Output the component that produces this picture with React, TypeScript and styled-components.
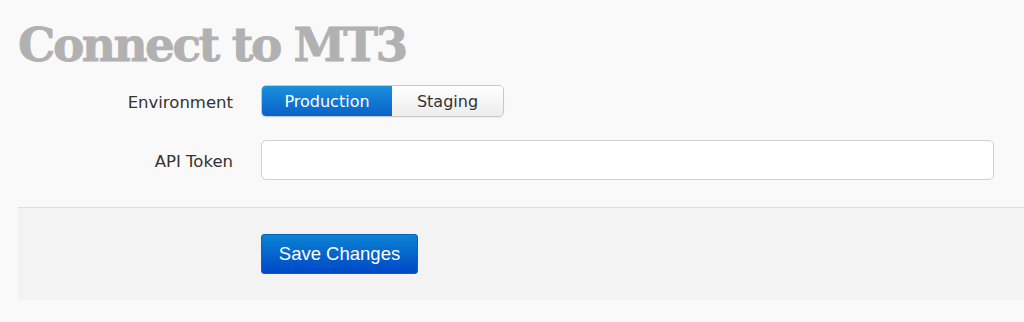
import { useState } from 'react';
import styled, { createGlobalStyle } from 'styled-components';

const GlobalStyle = createGlobalStyle`
  html, body {
    margin: 0;
    padding: 0;
    background-color: #f9f9f9;
    overflow: hidden;
  }
`;

const Page = styled.div`
  width: 1024px;
  height: 322px;
  padding-left: 18px;
  box-sizing: border-box;
  background-color: #f9f9f9;
`;

const Title = styled.h1`
  margin: 0;
  padding-top: 20px;
  height: 67px;
  box-sizing: border-box;
  font-family: 'DejaVu Serif', 'Liberation Serif', serif;
  font-weight: bold;
  font-size: 47px;
  line-height: 50px;
  letter-spacing: -2.5px;
  color: #b1b1b1;
  -webkit-text-stroke: 0.8px #b1b1b1;
`;

const Form = styled.div`
  display: flex;
  flex-direction: column;
  gap: 23px;
  padding-top: 18px;
  padding-right: 30px;
`;

const Row = styled.div`
  display: flex;
  align-items: center;
  gap: 28px;
`;

const Label = styled.label`
  width: 215px;
  padding-top: 3px;
  text-align: right;
  font-family: 'DejaVu Sans', Verdana, sans-serif;
  font-size: 16.5px;
  color: #333;
`;

const Segmented = styled.div`
  display: flex;
  height: 32px;
  border-radius: 5px;
  overflow: hidden;
  border: 1px solid #c8c8c8;
  box-sizing: border-box;
  box-shadow: 0 1px 1px rgba(0, 0, 0, 0.06);
`;

const Segment = styled.button<{ $active: boolean; $width: number }>`
  width: ${(p) => p.$width}px;
  border: none;
  margin: 0;
  padding: 0;
  font-family: 'DejaVu Sans', Verdana, sans-serif;
  font-size: 16px;
  cursor: pointer;
  color: ${(p) => (p.$active ? '#fff' : '#333')};
  background: ${(p) =>
    p.$active
      ? 'linear-gradient(to bottom, #1b8fdc, #0862c9)'
      : 'linear-gradient(to bottom, #ffffff, #ececec)'};
`;

const TokenInput = styled.input`
  flex: 1;
  height: 40px;
  box-sizing: border-box;
  border: 1px solid #cfcfcf;
  border-radius: 5px;
  background: #fff;
  font-size: 15px;
  padding: 0 10px;
  outline: none;
`;

const Footer = styled.div`
  margin-top: 27px;
  height: 93px;
  box-sizing: border-box;
  border-top: 1px solid #dedede;
  background-color: #f3f3f3;
  padding-top: 26px;
  padding-left: 243px;
`;

const SaveButton = styled.button`
  width: 157px;
  height: 40px;
  border: 1px solid #0a5fc0;
  border-radius: 3px;
  background: linear-gradient(to bottom, #0b83d4, #0047c7);
  color: #fff;
  font-family: 'Liberation Sans', Arial, sans-serif;
  font-size: 18.5px;
  cursor: pointer;
`;

export default function App() {
  const [env, setEnv] = useState('production');
  const [token, setToken] = useState('');

  return (
    <Page>
      <GlobalStyle />
      <Title>Connect to MT3</Title>
      <Form>
        <Row>
          <Label>Environment</Label>
          <Segmented>
            <Segment
              $active={env === 'production'}
              $width={130}
              onClick={() => setEnv('production')}
            >
              Production
            </Segment>
            <Segment
              $active={env === 'staging'}
              $width={111}
              onClick={() => setEnv('staging')}
            >
              Staging
            </Segment>
          </Segmented>
        </Row>
        <Row>
          <Label>API Token</Label>
          <TokenInput value={token} onChange={(e) => setToken(e.target.value)} />
        </Row>
      </Form>
      <Footer>
        <SaveButton>Save Changes</SaveButton>
      </Footer>
    </Page>
  );
}
